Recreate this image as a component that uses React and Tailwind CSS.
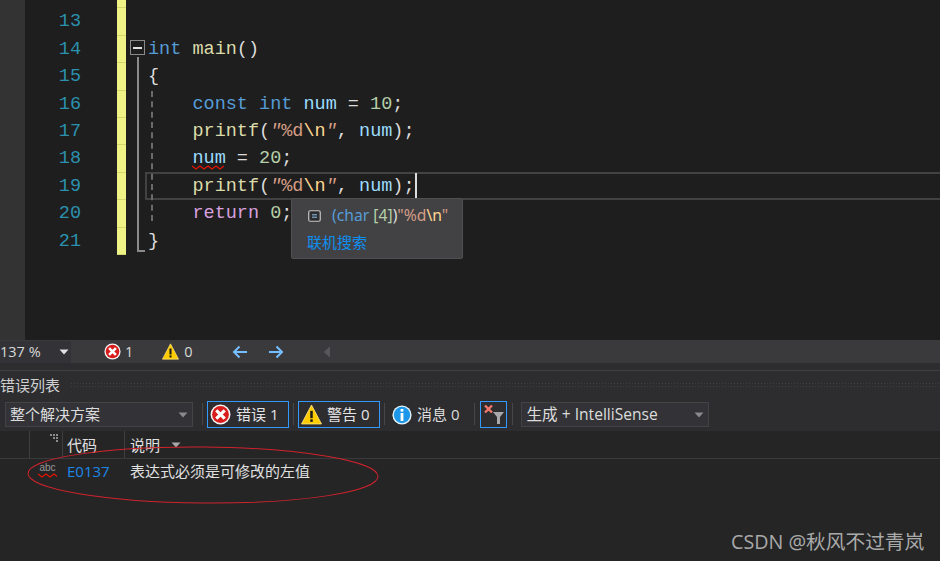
import React from "react";

const KW = "text-[#569cd6]";
const FN = "text-[#dcdcaa]";
const VAR = "text-[#9cdcfe]";
const NUM = "text-[#b5cea8]";
const STR = "text-[#d69d85]";
const ESC = "text-[#ffd68f]";
const PUN = "text-[#dcdcdc]";
const RET = "text-[#d8a0df]";

function ErrorIcon({ size = 18 }) {
  return (
    <svg width={size} height={size} viewBox="0 0 20 20" className="shrink-0">
      <circle cx="10" cy="10" r="9.5" fill="#f4f4f4" />
      <circle cx="10" cy="10" r="8" fill="#d81c1c" />
      <path d="M6 6l8 8M14 6l-8 8" stroke="#fff" strokeWidth="3" fill="none" />
    </svg>
  );
}

function WarnIcon({ size = 18 }) {
  return (
    <svg width={size} height={size} viewBox="0 0 20 20" className="shrink-0">
      <path d="M10 1L19.5 19H0.5Z" fill="#ffcc00" stroke="#ffe680" strokeWidth="0.8" strokeLinejoin="round" />
      <path d="M10 6.5v7" stroke="#1a1a1a" strokeWidth="2.4" />
      <rect x="8.8" y="14.6" width="2.4" height="2.4" fill="#1a1a1a" />
    </svg>
  );
}

function InfoIcon() {
  return (
    <svg width="20" height="20" viewBox="0 0 20 20" className="shrink-0">
      <circle cx="10" cy="10" r="9.6" fill="#e8f4fc" />
      <circle cx="10" cy="10" r="8.2" fill="#1c97ea" />
      <rect x="8.6" y="4" width="2.8" height="2.6" fill="#fff" />
      <rect x="8.6" y="8" width="2.8" height="8" fill="#fff" />
    </svg>
  );
}

function Caret({ color = "#8a8a8d" }) {
  return (
    <svg width="10" height="6" viewBox="0 0 10 6" className="shrink-0">
      <path d="M0.5 0.5h9L5 5.5z" fill={color} />
    </svg>
  );
}

function Sep() {
  return <div className="w-px h-[22px] bg-[#47474a] shrink-0" />;
}

function Squiggle({ width = 32 }) {
  return (
    <svg width={width} height="5" viewBox={`0 0 ${width} 5`} className="block">
      <path
        d="M0 1l4 3 4-3 4 3 4-3 4 3 4-3 4 3 4-3"
        stroke="#e51400"
        strokeWidth="1.2"
        fill="none"
      />
    </svg>
  );
}

const Q = () => <span className={`${STR} italic`}>"</span>;

function PrintfLine() {
  return (
    <>
      {"    "}
      <span className={FN}>printf</span>
      <span className={PUN}>(</span>
      <Q />
      <span className={STR}>%d</span>
      <span className={ESC}>\n</span>
      <Q />
      <span className={PUN}>, </span>
      <span className={VAR}>num</span>
      <span className={PUN}>);</span>
    </>
  );
}

const lines = [
  { n: 12, code: null },
  { n: 13, code: null },
  {
    n: 14,
    code: (
      <>
        <span className={KW}>int</span> <span className={FN}>main</span>
        <span className={PUN}>()</span>
      </>
    ),
  },
  { n: 15, code: <span className={PUN}>{"{"}</span> },
  {
    n: 16,
    code: (
      <>
        {"    "}
        <span className={KW}>const int</span> <span className={VAR}>num</span>
        <span className={PUN}> = </span>
        <span className={NUM}>10</span>
        <span className={PUN}>;</span>
      </>
    ),
  },
  { n: 17, code: <PrintfLine /> },
  {
    n: 18,
    code: (
      <>
        {"    "}
        <span className={`${VAR} relative`}>
          num
          <span className="absolute left-0 top-[17px] z-10">
            <Squiggle />
          </span>
        </span>
        <span className={PUN}> = </span>
        <span className={NUM}>20</span>
        <span className={PUN}>;</span>
      </>
    ),
  },
  { n: 19, code: <PrintfLine />, current: true },
  {
    n: 20,
    code: (
      <>
        {"    "}
        <span className={RET}>return</span> <span className={NUM}>0</span>
        <span className={PUN}>;</span>
      </>
    ),
  },
  { n: 21, code: <span className={PUN}>{"}"}</span> },
];

function CodeRow({ n, code, current }) {
  return (
    <div className="flex h-[27.4px] leading-[27.4px]">
      <div className="w-[56px] text-right text-[#2b91af]">{n}</div>
      <div className="w-[36px]" />
      <div className="w-[9px] bg-[#eff284] border-b border-[#d4d672]" />
      <div className="w-[22px]" />
      <div className="flex-1 relative whitespace-pre">
        {code}
        {current && (
          <>
            <div className="absolute -left-[3px] -right-[6px] -top-[1px] bottom-0 border-2 border-[#424242]" />
            <div className="absolute left-[267px] top-0 bottom-0 w-[2px] bg-[#dcdcdc]" />
          </>
        )}
      </div>
    </div>
  );
}

function Editor() {
  return (
    <div className="h-[340px] flex shrink-0 relative overflow-hidden">
      <div className="w-[25px] bg-[#333333] shrink-0" />
      <div className="flex-1 -mt-[19px] font-['Liberation_Mono',monospace] text-[18.5px]">
        {lines.map((l) => (
          <CodeRow key={l.n} {...l} />
        ))}
      </div>

      {/* fold box and guides */}
      <div className="absolute left-[130px] top-[40px] w-[15px] h-[15px] border border-[#8a8a8a] flex items-center justify-center">
        <div className="w-[9px] h-[2px] bg-[#e0e0e0]" />
      </div>
      <div className="absolute left-[137px] top-[57px] w-[8px] h-[195px] border-l-2 border-b-2 border-[#8a8a8a]" />
      <div className="absolute left-[151px] top-[91px] h-[130px] border-l-2 border-dashed border-[#6a6a6a]" />

      {/* quick info tooltip */}
      <div className="absolute left-[291px] top-[198px] w-[172px] h-[61px] bg-[#424245] border border-[#505053] rounded-[2px] font-['Noto_Sans','Noto_Sans_CJK_SC',sans-serif] text-[15.7px]">
        <div className="flex items-center h-[20px] mt-[7px] ml-[16px]">
          <svg width="13" height="12" viewBox="0 0 13 12" className="shrink-0">
            <rect x="0.75" y="0.75" width="11.5" height="10.5" rx="1.5" fill="#2d2d30" stroke="#c8c8c8" strokeWidth="1.2" />
            <path d="M4 4.8h5M4 7.2h5" stroke="#8fc6f0" strokeWidth="1" />
          </svg>
          <span className="ml-[11px] whitespace-pre">
            <span className="text-[#569cd6]">(char </span>
            <span className="text-[#b5cea8]">[</span>
            <span className="text-[#b5cea8]">4</span>
            <span className="text-[#b5cea8]">]</span>
            <span className="text-[#dcdcdc]">)</span>
            <span className="text-[#d69d85]">"%d</span>
            <span className="text-[#ffd68f]">\n</span>
            <span className="text-[#d69d85]">"</span>
          </span>
        </div>
        <div className="ml-[15px] mt-[6px] leading-[20px] text-[15px] text-[#0e8ff0]">联机搜索</div>
      </div>
    </div>
  );
}

function StatusBar() {
  return (
    <div className="h-[23px] bg-[#3a3a3d] flex items-center shrink-0 text-[#d8d8d8] text-[14.5px]">
      <div className="w-[71px] h-[22px] bg-[#333337] flex items-center justify-between pr-[2px] mr-[33px]">
        <span>137 %</span>
        <Caret color="#e0e0e0" />
      </div>
      <ErrorIcon size={17} />
      <span className="ml-[4px]">1</span>
      <div className="ml-[29px]">
        <WarnIcon size={17} />
      </div>
      <span className="ml-[5px]">0</span>
      <svg width="16" height="14" viewBox="0 0 16 14" className="ml-[39px]">
        <path d="M15 7H2M7.5 1.5L2 7l5.5 5.5" stroke="#75beff" strokeWidth="2" fill="none" />
      </svg>
      <svg width="16" height="14" viewBox="0 0 16 14" className="ml-[20px]">
        <path d="M1 7h13M8.5 1.5L14 7l-5.5 5.5" stroke="#75beff" strokeWidth="2" fill="none" />
      </svg>
      <svg width="8" height="12" viewBox="0 0 8 12" className="ml-[39px]">
        <path d="M7 0.5v11L0.5 6z" fill="#57575b" />
      </svg>
    </div>
  );
}

function ToolButton({ icon, label }) {
  return (
    <div className="h-[27px] w-[82px] border border-[#3399ff] flex items-center pl-[2px] gap-[5px] text-[#e4e4e4]">
      {icon}
      <span>{label}</span>
    </div>
  );
}

function Toolbar() {
  return (
    <div className="h-[30px] bg-[#2d2d30] flex items-start shrink-0 text-[15px] text-[#dcdcdc]">
      <div className="ml-[5px] mt-[1px] w-[188px] h-[25px] bg-[#333337] border border-[#434346] flex items-center justify-between pl-[4px] pr-[4px]">
        <span>整个解决方案</span>
        <Caret />
      </div>
      <div className="ml-[9px] mt-[2px]">
        <Sep />
      </div>
      <div className="ml-[4px]">
        <ToolButton icon={<ErrorIcon size={21} />} label="错误 1" />
      </div>
      <div className="ml-[4px] mt-[2px]">
        <Sep />
      </div>
      <div className="ml-[4px]">
        <ToolButton icon={<WarnIcon size={21} />} label="警告 0" />
      </div>
      <div className="ml-[4px] mt-[2px]">
        <Sep />
      </div>
      <div className="ml-[7px] h-[27px] flex items-center gap-[5px]">
        <InfoIcon />
        <span>消息 0</span>
      </div>
      <div className="ml-[15px] mt-[2px]">
        <Sep />
      </div>
      <div className="ml-[5px] w-[27px] h-[27px] border border-[#3399ff] relative">
        <svg width="25" height="25" viewBox="0 0 25 25">
          <path d="M4 3.5l7 7M11 3.5l-7 7" stroke="#f1786a" strokeWidth="2.4" />
          <path d="M12 10h11l-4 5v7h-3v-7z" fill="#a8a8a8" />
        </svg>
      </div>
      <div className="ml-[5px] mt-[2px]">
        <Sep />
      </div>
      <div className="ml-[8px] mt-[1px] w-[188px] h-[25px] bg-[#333337] border border-[#434346] flex items-center justify-between pl-[4px] pr-[4px] text-[15.6px]">
        <span>生成 + IntelliSense</span>
        <Caret />
      </div>
    </div>
  );
}

function ErrorTable() {
  return (
    <div className="flex-1 bg-[#252526] text-[15px] text-[#e0e0e0]">
      <div className="h-[28px] flex border-b border-[#3a3a3c]">
        <div className="w-[30px] border-r border-[#3f3f42]" />
        <div className="w-[33px] border-r border-[#3f3f42] relative">
          <div className="absolute right-[4px] top-[3px] grid grid-cols-3 gap-px">
            <span className="w-[2px] h-[2px] bg-[#8a8a8a]" />
            <span className="w-[2px] h-[2px] bg-[#8a8a8a]" />
            <span className="w-[2px] h-[2px] bg-[#8a8a8a]" />
            <span />
            <span className="w-[2px] h-[2px] bg-[#8a8a8a]" />
            <span className="w-[2px] h-[2px] bg-[#8a8a8a]" />
            <span />
            <span />
            <span className="w-[2px] h-[2px] bg-[#8a8a8a]" />
          </div>
        </div>
        <div className="w-[62px] border-r border-[#3f3f42] pl-[4px] leading-[28px]">代码</div>
        <div className="pl-[5px] flex items-center gap-[11px] leading-[28px]">
          <span>说明</span>
          <Caret color="#a8a8a8" />
        </div>
      </div>
      <div className="flex h-[25px] items-center">
        <div className="w-[38px]" />
        <div className="w-[19px] flex flex-col items-center -mt-[2px]">
          <span className="text-[10px] leading-[10px] text-[#9a9a9a] font-['Liberation_Sans',sans-serif]">abc</span>
          <Squiggle width={19} />
        </div>
        <div className="w-[10px]" />
        <div className="w-[63px] text-[#1c87e8]">E0137</div>
        <div>表达式必须是可修改的左值</div>
      </div>
    </div>
  );
}

export default function App() {
  return (
    <div className="w-[940px] h-[561px] relative overflow-hidden flex flex-col bg-[#1e1e1e] font-['Open_Sans','Noto_Sans_CJK_SC',sans-serif]">
      <Editor />
      <StatusBar />
      <div className="h-[8px] bg-[#2d2d30] border-b border-[#3f3f42] shrink-0" />
      <div className="h-[30px] bg-[#2d2d30] flex items-center shrink-0 text-[15px] text-[#d0d0d0] pb-[2px]">
        <span className="shrink-0">错误列表</span>
        <div className="flex-1 h-[6px] ml-[10px] bg-[radial-gradient(circle,#404044_1px,transparent_1px)] bg-[length:3px_3px]" />
      </div>
      <Toolbar />
      <ErrorTable />

      {/* hand-drawn annotation */}
      <svg width="940" height="561" className="absolute left-0 top-0 pointer-events-none">
        <ellipse cx="203" cy="475" rx="175" ry="28" fill="none" stroke="#d0232c" strokeWidth="1" transform="rotate(0.5 203 475)" />
      </svg>

      <div className="absolute left-[731px] top-[528px] text-[19.7px] leading-[28px] text-[#a9a9a9] whitespace-nowrap">
        CSDN @秋风不过青岚
      </div>
    </div>
  );
}
